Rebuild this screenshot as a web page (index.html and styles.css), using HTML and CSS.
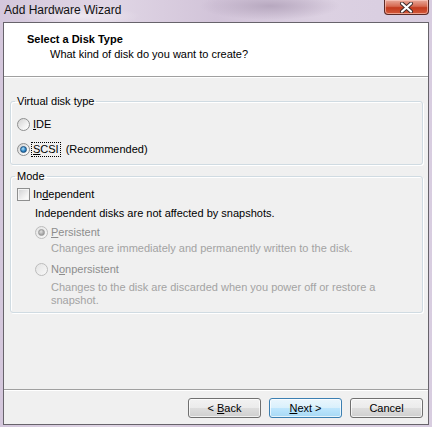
FILE: index.html
```html
<!DOCTYPE html>
<html lang="en">
<head>
    <meta charset="UTF-8">
    <title>Add Hardware Wizard</title>
    <link rel="stylesheet" href="styles.css">
</head>
<body>

    <div class="window">
        <div class="titlebar">
            <span class="title">Add Hardware Wizard</span>
            <span class="close-btn">
                <svg width="17" height="11" viewBox="0 0 17 11">
                    <path d="M4 1.5 L13 9.5 M13 1.5 L4 9.5" stroke="#3a2a2a" stroke-width="4" stroke-linecap="round"/>
                    <path d="M4 1.5 L13 9.5 M13 1.5 L4 9.5" stroke="#fff" stroke-width="2.2" stroke-linecap="round"/>
                </svg>
            </span>
        </div>

        <div class="client">
            <div class="header">
                <div class="header-title">Select a Disk Type</div>
                <div class="header-sub">What kind of disk do you want to create?</div>
            </div>

            <div class="content">
                <fieldset class="group group-type">
                    <legend>Virtual disk type</legend>
                    <div class="option">
                        <span class="radio"></span>
                        <span><u>I</u>DE</span>
                    </div>
                    <div class="option option-second">
                        <span class="radio checked"></span>
                        <span class="focus"><u>S</u>CSI</span>
                        <span class="note">(Recommended)</span>
                    </div>
                </fieldset>

                <fieldset class="group group-mode">
                    <legend>Mode</legend>
                    <div class="option">
                        <span class="checkbox"></span>
                        <span>In<u>d</u>ependent</span>
                    </div>
                    <div class="desc">Independent disks are not affected by snapshots.</div>
                    <div class="option sub-option disabled">
                        <span class="radio checked"></span>
                        <span><u>P</u>ersistent</span>
                    </div>
                    <div class="sub-desc disabled">Changes are immediately and permanently written to the disk.</div>
                    <div class="option sub-option option-non disabled">
                        <span class="radio"></span>
                        <span>N<u>o</u>npersistent</span>
                    </div>
                    <div class="sub-desc sub-desc-last disabled">Changes to the disk are discarded when you power off or restore a<br>snapshot.</div>
                </fieldset>
            </div>

            <div class="footer">
                <button class="btn">&lt; <u>B</u>ack</button>
                <button class="btn btn-default"><u>N</u>ext &gt;</button>
                <button class="btn">Cancel</button>
            </div>
        </div>
    </div>

</body>
</html>
```

FILE: styles.css
```css
body {
    margin: 0;
    font-family: "Liberation Sans", Arial, sans-serif;
    font-size: 11px;
}

.window {
    width: 432px;
    height: 427px;
    box-sizing: border-box;
    padding: 0 3px 2px 3px;
    display: flex;
    flex-direction: column;
    background:
        radial-gradient(ellipse 70px 14px at 270px 6px, #b7a8bf, transparent),
        radial-gradient(ellipse 60px 10px at 80px 16px, #eee8f0, transparent),
        linear-gradient(90deg, #d4c7dc 0%, #e0d6e5 25%, #d2c4d9 50%, #dcd1e2 75%, #d8cde0 100%);
}

.titlebar {
    height: 22px;
    display: flex;
    align-items: flex-start;
}

.title {
    font-size: 12px;
    line-height: 20px;
    margin-left: 1px;
    color: #111;
}

.close-btn {
    margin-left: auto;
    width: 43px;
    height: 14px;
    border: 1px solid #5b2a26;
    border-top: none;
    border-radius: 0 0 4px 4px;
    background: linear-gradient(#e8a99a 0%, #d66a52 45%, #c23a1e 55%, #d45a3a 100%);
    box-shadow: inset 0 0 0 1px rgba(255, 210, 200, 0.6);
    display: flex;
    align-items: center;
    justify-content: center;
}

.client {
    flex: 1;
    display: flex;
    flex-direction: column;
    border: 1px solid #67636b;
    background-color: #f0f0f0;
}

.header {
    height: 54px;
    box-sizing: border-box;
    padding: 10px 0 0 23px;
    background-color: #fff;
    border-bottom: 1px solid #a0a0a0;
    box-shadow: 0 1px 0 #fff;
    line-height: 13px;
}

.header-title {
    font-weight: bold;
}

.header-sub {
    margin: 2px 0 0 23px;
    color: #000;
}

.content {
    flex: 1;
    padding: 0 5px 0 6px;
    line-height: 13px;
}

.group {
    margin: 0;
    border: 1px solid #d0dbe2;
    border-radius: 3px;
    box-shadow: inset 1px 1px 0 #fff, 1px 1px 0 #fff;
    padding: 0 6px;
    min-width: 0;
}

.group legend {
    padding: 0 2px;
    margin-left: -2px;
    line-height: 13px;
}

.group-type {
    margin-top: 18px;
    padding-top: 9px;
    padding-bottom: 8px;
}

.group-mode {
    margin-top: 5px;
    padding-top: 4px;
    padding-bottom: 5px;
}

.option {
    height: 14px;
    display: flex;
    align-items: center;
    gap: 3px;
}

.option-second {
    margin-top: 11px;
}

.note {
    margin-left: 3px;
}

.focus {
    outline: 1px dotted #000;
    outline-offset: 0;
    padding: 0 1px;
    margin-left: -1px;
}

.desc {
    margin: 6px 0 0 18px;
}

.sub-option {
    margin: 5px 0 0 18px;
}

.option-non {
    margin-top: 7px;
}

.sub-desc {
    margin: 3px 0 0 34px;
}

.sub-desc-last {
    margin-top: 5px;
}

.disabled {
    color: #8d8d8d;
}

.sub-desc.disabled {
    color: #a3a3a3;
}

.radio {
    width: 13px;
    height: 13px;
    box-sizing: border-box;
    border-radius: 50%;
    border: 1px solid #8e8f8f;
    background: linear-gradient(135deg, #d2d2d2, #f6f6f6 70%, #fff);
    display: grid;
    place-items: center;
    flex-shrink: 0;
}

.radio.checked::after {
    content: "";
    width: 5px;
    height: 5px;
    border-radius: 50%;
    border: 1px solid #1d4f7c;
    background: radial-gradient(circle at 40% 35%, #b5e2fa, #2c86c8 55%, #0f4a80);
}

.disabled .radio {
    border-color: #bcbcbc;
    background: linear-gradient(135deg, #e4e4e4, #f8f8f8);
}

.disabled .radio.checked::after {
    border-color: #9a9a9a;
    background: radial-gradient(circle at 40% 35%, #e0e0e0, #a8a8a8 60%, #8a8a8a);
}

.checkbox {
    width: 13px;
    height: 13px;
    box-sizing: border-box;
    border: 1px solid #8e8f8f;
    background: linear-gradient(135deg, #cfd0d2, #f4f4f4 70%, #fff);
    box-shadow: inset 0 0 0 1px #f4f4f4;
    flex-shrink: 0;
}

.footer {
    height: 35px;
    box-sizing: border-box;
    padding: 8px 5px 6px 0;
    border-top: 1px solid #a0a0a0;
    box-shadow: inset 0 1px 0 #fff;
    display: flex;
    justify-content: flex-end;
    gap: 8px;
}

.btn {
    width: 73px;
    height: 20px;
    padding: 0;
    font-family: "Liberation Sans", Arial, sans-serif;
    font-size: 11px;
    color: #000;
    border: 1px solid #707070;
    border-radius: 3px;
    background: linear-gradient(#f2f2f2 0%, #ebebeb 50%, #dddddd 51%, #cfcfcf 100%);
    box-shadow: inset 0 0 0 1px rgba(255, 255, 255, 0.7);
}

.btn-default {
    border-color: #3c7fb1;
    background: linear-gradient(#eaf6fd 0%, #d9f0fc 50%, #bee6fd 51%, #a7d9f5 100%);
}
```
